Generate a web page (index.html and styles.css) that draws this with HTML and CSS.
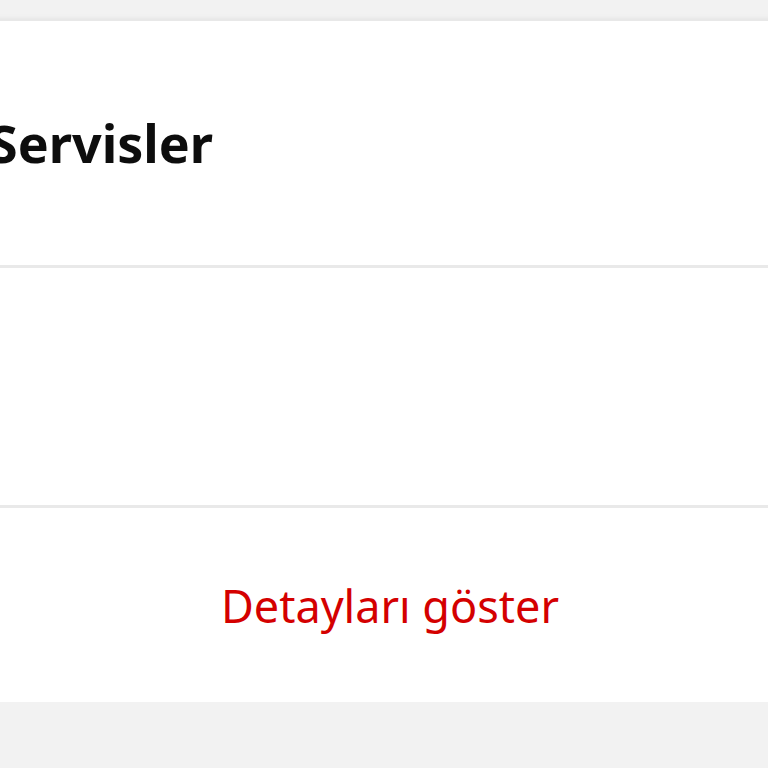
FILE: index.html
```html
<!DOCTYPE html>
<html lang="tr">
<head>
<meta charset="UTF-8">
<meta name="viewport" content="width=device-width, initial-scale=1.0">
<title>Servisler</title>
<link rel="stylesheet" href="styles.css">
</head>
<body>

<div class="page">
  <div class="card">
    <div class="card-header">
      <h2 class="card-title">Servisler</h2>
    </div>
    <div class="card-body"></div>
    <div class="card-footer">
      <a href="#" class="details-link">Detayları göster</a>
    </div>
  </div>
</div>

</body>
</html>
```

FILE: styles.css
```css
/* Global Styles */
body {
  font-family: "Noto Sans", Arial, sans-serif;
  background-color: #f2f2f2;
  margin: 0;
  padding: 0;
  overflow: hidden;
}
.page {
  padding-top: 19px;
}
.card {
  margin: 0 -27px 0 -12px;
  background-color: #fff;
  border-top: 2px solid #e8e8e8;
  box-shadow: 0 4px 8px rgba(0, 0, 0, 0.22);
}
.card-header {
  height: 244px;
  display: flex;
  align-items: center;
  border-bottom: 3px solid #e9e9e9;
}
.card-title {
  margin: 0 0 2px;
  padding-left: 1px;
  font-size: 52px;
  font-weight: bold;
  color: #0d0d0d;
}
.card-body {
  height: 237px;
  border-bottom: 3px solid #e9e9e9;
}
.card-footer {
  height: 194px;
  display: flex;
  align-items: center;
  justify-content: center;
}
.details-link {
  color: #d40000;
  text-decoration: none;
  font-size: 45px;
  margin-left: -3px;
}
```
